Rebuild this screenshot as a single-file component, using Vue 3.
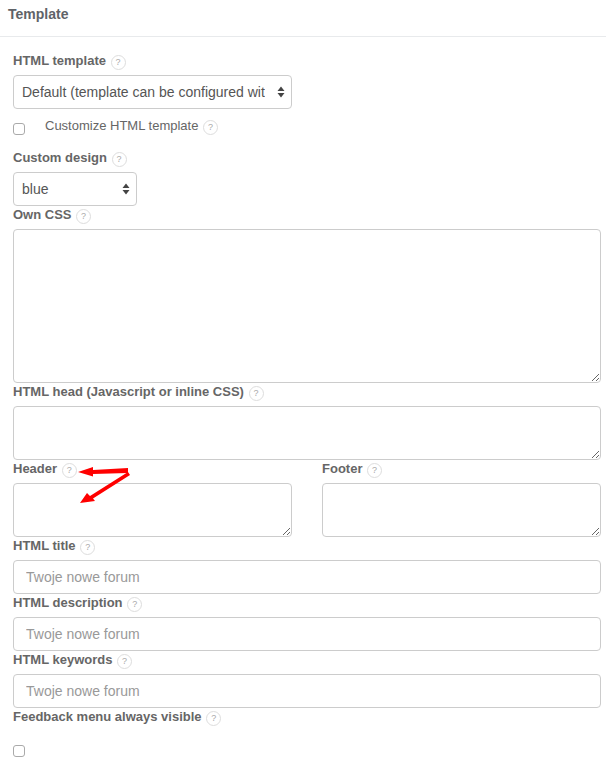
<script setup>
const helpRow = [
  { label: 'HTML title', name: 'title' },
  { label: 'HTML description', name: 'description' },
  { label: 'HTML keywords', name: 'keywords' },
]
</script>

<template>
  <div class="panel">
    <h3 class="panel-title">Template</h3>
    <form class="form" @submit.prevent>
      <label class="lbl">HTML template <span class="help">?</span></label>
      <div class="select-wrap wide">
        <select class="control">
          <option>Default (template can be configured with the editor)</option>
        </select>
        <svg class="caret" width="8" height="12" viewBox="0 0 8 12"><path d="M4 0.5 7.5 5H.5zM4 11.5.5 7h7z" fill="#444" /></svg>
      </div>
      <div class="check-row">
        <input type="checkbox" class="check" />
        <span class="check-label">Customize HTML template <span class="help">?</span></span>
      </div>

      <label class="lbl">Custom design <span class="help">?</span></label>
      <div class="select-wrap narrow">
        <select class="control">
          <option>blue</option>
        </select>
        <svg class="caret" width="8" height="12" viewBox="0 0 8 12"><path d="M4 0.5 7.5 5H.5zM4 11.5.5 7h7z" fill="#444" /></svg>
      </div>

      <label class="lbl">Own CSS <span class="help">?</span></label>
      <textarea class="area tall"></textarea>

      <label class="lbl">HTML head (Javascript or inline CSS) <span class="help">?</span></label>
      <textarea class="area"></textarea>

      <div class="cols">
        <div class="col">
          <label class="lbl">Header <span class="help">?</span></label>
          <textarea class="area"></textarea>
          <svg class="arrows" width="70" height="50" viewBox="0 0 70 50">
            <path d="M0 12 15 7 15 10 50 8 50 13 15 14 15 16.500Z" fill="#f00" />
            <path d="M2 43 9 33 12 36 50 12 52 15 15 38.500 17 41Z" fill="#f00" />
          </svg>
        </div>
        <div class="col">
          <label class="lbl">Footer <span class="help">?</span></label>
          <textarea class="area"></textarea>
        </div>
      </div>

      <template v-for="row in helpRow" :key="row.name">
        <label class="lbl">{{ row.label }} <span class="help">?</span></label>
        <input class="control text" type="text" placeholder="Twoje nowe forum" />
      </template>

      <label class="lbl">Feedback menu always visible <span class="help">?</span></label>
      <div class="last-check">
        <input type="checkbox" class="check" />
      </div>
    </form>
  </div>
</template>

<style>
html,
body {
  margin: 0;
  background: #fff;
}
</style>

<style scoped>
.panel {
  width: 606px;
  height: 768px;
  overflow: hidden;
  font-family: 'Liberation Sans', Arial, sans-serif;
  color: #555;
}
.panel-title {
  margin: 0;
  height: 30px;
  padding: 6px 8px 0;
  font-size: 14px;
  line-height: 17px;
  font-weight: 700;
  color: #5f6368;
  border-bottom: 1px solid #e8eaec;
}
.form {
  padding: 15px 5px 0 13px;
  display: flex;
  flex-direction: column;
}
.lbl {
  display: block;
  height: 20px;
  margin-bottom: 3px;
  font-size: 13px;
  line-height: 17px;
  font-weight: 700;
  color: #666;
  white-space: nowrap;
}
.help {
  display: inline-block;
  width: 13px;
  height: 13px;
  margin-left: 1px;
  border: 1px solid #ddd;
  border-radius: 50%;
  font-size: 9px;
  line-height: 13px;
  font-weight: 400;
  text-align: center;
  color: #aaa;
  vertical-align: 0;
  background: #fff;
}
.select-wrap {
  position: relative;
  height: 34px;
}
.select-wrap.wide {
  width: 279px;
}
.select-wrap.narrow {
  width: 124px;
}
.control {
  display: block;
  width: 100%;
  height: 34px;
  box-sizing: border-box;
  border: 1px solid #ccc;
  border-radius: 4px;
  background: #fff;
  font-family: inherit;
  font-size: 14px;
  color: #555;
  outline: none;
}
select.control {
  appearance: none;
  -webkit-appearance: none;
  padding: 0 26px 0 8px;
}
.caret {
  position: absolute;
  right: 7px;
  top: 11px;
  pointer-events: none;
}
.text {
  padding: 0 12px;
}
.text::placeholder {
  color: #999;
  opacity: 1;
}
.check-row {
  display: flex;
  align-items: flex-start;
  height: 40px;
}
.check {
  appearance: none;
  -webkit-appearance: none;
  display: block;
  flex: none;
  width: 12px;
  height: 12px;
  margin: 14px 0 0;
  box-sizing: border-box;
  border: 1px solid #aaa;
  border-radius: 3px;
  background: #fff;
}
.check-label {
  margin: 9px 0 0 20px;
  font-size: 13px;
  line-height: 16px;
  color: #666;
}
.area {
  display: block;
  width: 100%;
  height: 54px;
  box-sizing: border-box;
  border: 1px solid #ccc;
  border-radius: 4px;
  background: #fff;
  outline: none;
  margin: 0;
  padding: 6px 12px;
}
.area.tall {
  height: 154px;
}
.cols {
  display: flex;
  gap: 30px;
}
.col {
  position: relative;
  width: 279px;
}
.arrows {
  position: absolute;
  left: 65px;
  top: 0;
}
</style>
